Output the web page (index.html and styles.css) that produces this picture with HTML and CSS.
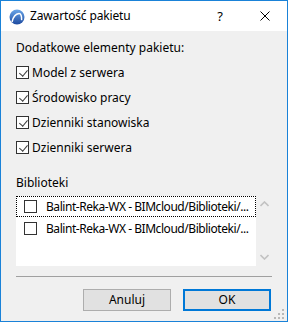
FILE: index.html
```html
<!DOCTYPE html>
<html lang="pl">
<head>
<meta charset="utf-8">
<link rel="stylesheet" href="styles.css">
</head>
<body>
<div class="dialog">
  <div class="titlebar">
    <svg class="app-icon" width="16" height="16" viewBox="0 0 16 16">
      <defs>
        <linearGradient id="g" x1="0" y1="0" x2="0" y2="1">
          <stop offset="0" stop-color="#6aa6e8"/>
          <stop offset="1" stop-color="#1d4aa0"/>
        </linearGradient>
      </defs>
      <circle cx="8" cy="8" r="7.5" fill="url(#g)"/>
      <path d="M3.2 12.6 C4.2 8 7 5 10 4.6 C11.8 4.5 12.8 7 12.6 10.6" fill="none" stroke="#fff" stroke-width="1.5" stroke-linecap="round"/>
    </svg>
    <span class="title">Zawartość pakietu</span>
    <span class="help">?</span>
    <svg class="close" width="10" height="10" viewBox="0 0 10 10">
      <path d="M0.5 0.5 L9.5 9.5 M9.5 0.5 L0.5 9.5" stroke="#000" stroke-width="1"/>
    </svg>
  </div>
  <div class="content">
    <div class="label">Dodatkowe elementy pakietu:</div>
    <div class="checks">
      <div class="check-row"><span class="cb checked"></span><span>Model z serwera</span></div>
      <div class="check-row"><span class="cb checked"></span><span>Środowisko pracy</span></div>
      <div class="check-row"><span class="cb checked"></span><span>Dzienniki stanowiska</span></div>
      <div class="check-row"><span class="cb checked"></span><span>Dzienniki serwera</span></div>
    </div>
    <div class="label lib-label">Biblioteki</div>
    <div class="listbox">
      <div class="list-items">
        <div class="list-row focused"><span class="cb small"></span><span class="item-text">Balint-Reka-WX - BIMcloud/Biblioteki/...</span></div>
        <div class="list-row"><span class="cb small"></span><span class="item-text">Balint-Reka-WX - BIMcloud/Biblioteki/...</span></div>
      </div>
      <div class="scrollbar">
        <svg width="9" height="6" viewBox="0 0 9 6"><path d="M0.5 5 L4.5 1 L8.5 5" fill="none" stroke="#c2c2c2" stroke-width="1.6"/></svg>
        <svg width="9" height="6" viewBox="0 0 9 6"><path d="M0.5 1 L4.5 5 L8.5 1" fill="none" stroke="#c2c2c2" stroke-width="1.6"/></svg>
      </div>
    </div>
    <div class="separator"></div>
    <div class="buttons">
      <button class="btn">Anuluj</button>
      <button class="btn default">OK</button>
    </div>
  </div>
  <div class="grip">
    <i class="d1"></i><i class="d2"></i><i class="d3"></i><i class="d4"></i><i class="d5"></i><i class="d6"></i>
  </div>
</div>
</body>
</html>
```
FILE: styles.css
```css
* { box-sizing: border-box; }
html, body { margin: 0; padding: 0; }
body {
  width: 288px;
  height: 322px;
  font-family: "Segoe UI", "Noto Sans", "Open Sans", sans-serif;
  font-size: 12px;
  color: #000;
  background: #f0f0f0;
}
.dialog {
  position: relative;
  width: 288px;
  height: 322px;
  border: 1px solid #1a82d8;
  background: #f0f0f0;
  display: flex;
  flex-direction: column;
}
.titlebar {
  height: 30px;
  background: #fff;
  display: flex;
  align-items: center;
  flex: none;
}
.app-icon { margin-left: 8px; margin-top: 1px; }
.title { margin-left: 5px; font-size: 12px; line-height: 16px; letter-spacing: -0.15px; }
.help { margin-left: auto; margin-right: 37px; font-size: 13px; }
.close { margin-right: 17px; }
.content {
  padding: 9px 15px 0 15px;
  display: flex;
  flex-direction: column;
}
.label { line-height: 16px; height: 16px; }
.checks { margin-top: 4px; display: flex; flex-direction: column; }
.check-row {
  height: 25px;
  display: flex;
  align-items: center;
  gap: 3px;
  line-height: 16px;
}
.cb {
  width: 13px;
  height: 13px;
  border: 1px solid #333;
  background: #fff;
  flex: none;
  position: relative;
}
.cb.checked::after {
  content: "";
  position: absolute;
  left: 3.5px;
  top: 0.5px;
  width: 3.5px;
  height: 7px;
  border-right: 1.3px solid #3c3c3c;
  border-bottom: 1.3px solid #3c3c3c;
  transform: rotate(40deg);
}
.lib-label { margin-top: 15px; }
.listbox {
  margin-top: 5px;
  height: 70px;
  display: flex;
}
.list-items {
  width: 240px;
  background: #fff;
  display: flex;
  flex-direction: column;
}
.list-row {
  height: 21px;
  display: flex;
  align-items: center;
  padding-left: 7px;
  border: 1px dotted transparent;
  white-space: nowrap;
  line-height: 16px;
}
.list-row.focused { border-color: #000; }
.list-row + .list-row { margin-top: 1px; }
.cb.small { width: 13px; height: 13px; }
.item-text { margin-left: 9px; letter-spacing: -0.45px; }
.scrollbar {
  width: 16px;
  display: flex;
  flex-direction: column;
  align-items: center;
  justify-content: space-between;
  padding: 5px 0 6px 0;
}
.separator {
  margin-top: 10px;
  height: 1px;
  width: 256px;
  background: #a0a0a0;
}
.buttons {
  margin-top: 12px;
  display: flex;
  justify-content: flex-end;
  gap: 12px;
  padding-right: 1px;
}
.btn {
  width: 88px;
  height: 22px;
  font-family: inherit;
  font-size: 12px;
  color: #000;
  background: #e1e1e1;
  border: 1px solid #adadad;
  padding: 0;
  margin: 0;
  line-height: 18px;
}
.btn.default { border: 2px solid #0078d7; }
.grip { position: absolute; right: 2px; bottom: 1px; width: 12px; height: 12px; }
.grip i { position: absolute; width: 2px; height: 2px; background: #b8b8b8; }
.grip .d1 { right: 1px; top: 1px; }
.grip .d2 { right: 1px; top: 5px; }
.grip .d3 { right: 5px; top: 5px; }
.grip .d4 { right: 1px; top: 9px; }
.grip .d5 { right: 5px; top: 9px; }
.grip .d6 { right: 9px; top: 9px; }
```
